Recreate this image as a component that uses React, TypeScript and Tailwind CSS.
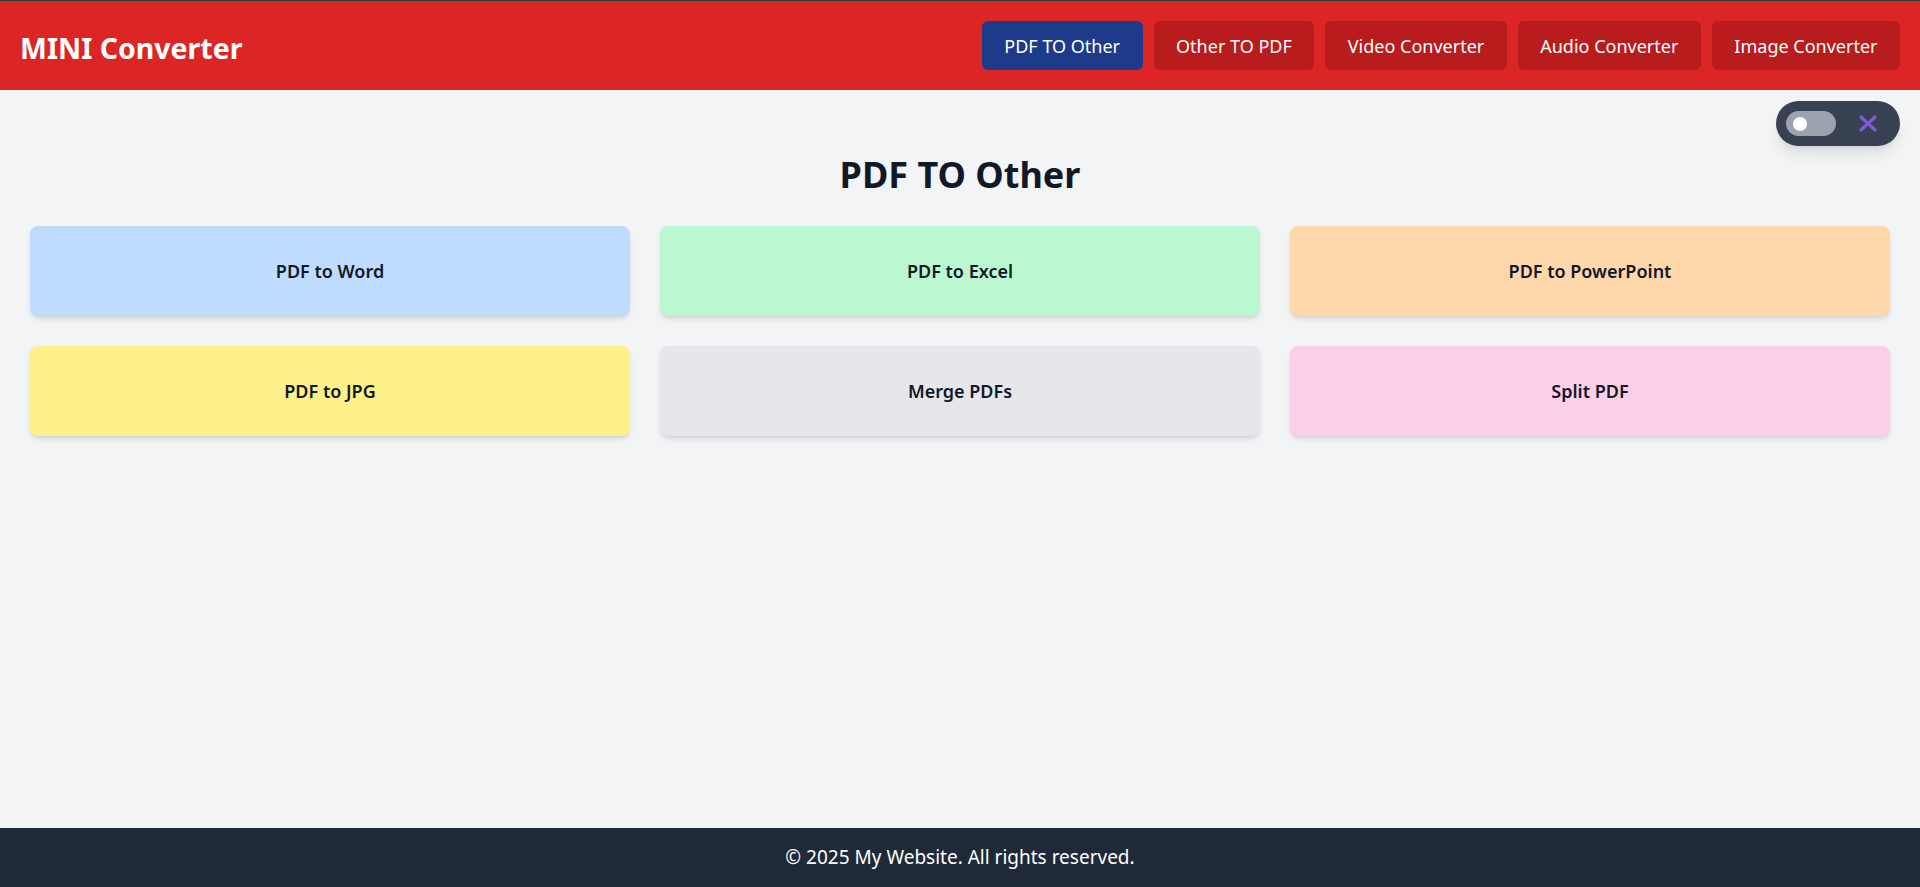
import { useState } from 'react'

const navItems = ['PDF TO Other', 'Other TO PDF', 'Video Converter', 'Audio Converter', 'Image Converter']

const tools = [
  { label: 'PDF to Word', color: 'bg-[#bfdbfe]' },
  { label: 'PDF to Excel', color: 'bg-[#bbf7d0]' },
  { label: 'PDF to PowerPoint', color: 'bg-[#fed7aa]' },
  { label: 'PDF to JPG', color: 'bg-[#fef08a]' },
  { label: 'Merge PDFs', color: 'bg-[#e5e7eb]' },
  { label: 'Split PDF', color: 'bg-[#fbcfe8]' },
]

const font = { fontFamily: '"Noto Sans", "Open Sans", sans-serif' }

export default function App() {
  const [active, setActive] = useState('PDF TO Other')
  const [dark, setDark] = useState(false)

  return (
    <div className="relative flex min-h-screen flex-col bg-[#f3f4f6]" style={font}>
      {/* Header */}
      <header className="flex h-[90px] items-center justify-between border-t border-[#3b3b3b] bg-[#dc2626] px-5">
        <h1 className="pt-[5px] text-[28.5px] font-bold text-white">MINI Converter</h1>
        <nav className="flex gap-[11px]">
          {navItems.map((item) => (
            <button
              key={item}
              onClick={() => setActive(item)}
              className={`rounded-md px-[22.5px] py-[10.5px] text-lg text-white ${
                active === item ? 'bg-[#1e3a8a]' : 'bg-[#b91c1c]'
              }`}
            >
              {item}
            </button>
          ))}
        </nav>
      </header>

      {/* Floating toggle */}
      <div className="absolute right-5 top-[101px] flex h-[45px] w-[124px] items-center justify-between rounded-full bg-[#374151] pl-[10px] pr-[23px] shadow-lg">
        <button
          onClick={() => setDark(!dark)}
          className="flex h-[25px] w-[50px] items-center rounded-full bg-[#9ca3af] px-[7px]"
        >
          <span className="h-[14px] w-[14px] rounded-full bg-white" />
        </button>
        <svg width="18" height="17" viewBox="0 0 18 17" className="text-[#7b5cd6]">
          <path d="M2 2 L16 15 M16 2 L2 15" stroke="currentColor" strokeWidth="3.2" strokeLinecap="round" />
        </svg>
      </div>

      {/* Main */}
      <main className="flex-1 px-[30px] pt-[65px]">
        <h2 className="mb-[31px] text-center text-4xl font-bold text-[#111827]">PDF TO Other</h2>
        <div className="grid grid-cols-3 gap-[30px]">
          {tools.map((tool) => (
            <button
              key={tool.label}
              className={`${tool.color} rounded-lg py-[31px] text-center text-lg font-semibold text-[#111827] shadow-md`}
            >
              {tool.label}
            </button>
          ))}
        </div>
      </main>

      {/* Footer */}
      <footer className="flex h-[59px] items-center justify-center bg-[#1f2937] text-[19px] text-white">
        © 2025 My Website. All rights reserved.
      </footer>
    </div>
  )
}
